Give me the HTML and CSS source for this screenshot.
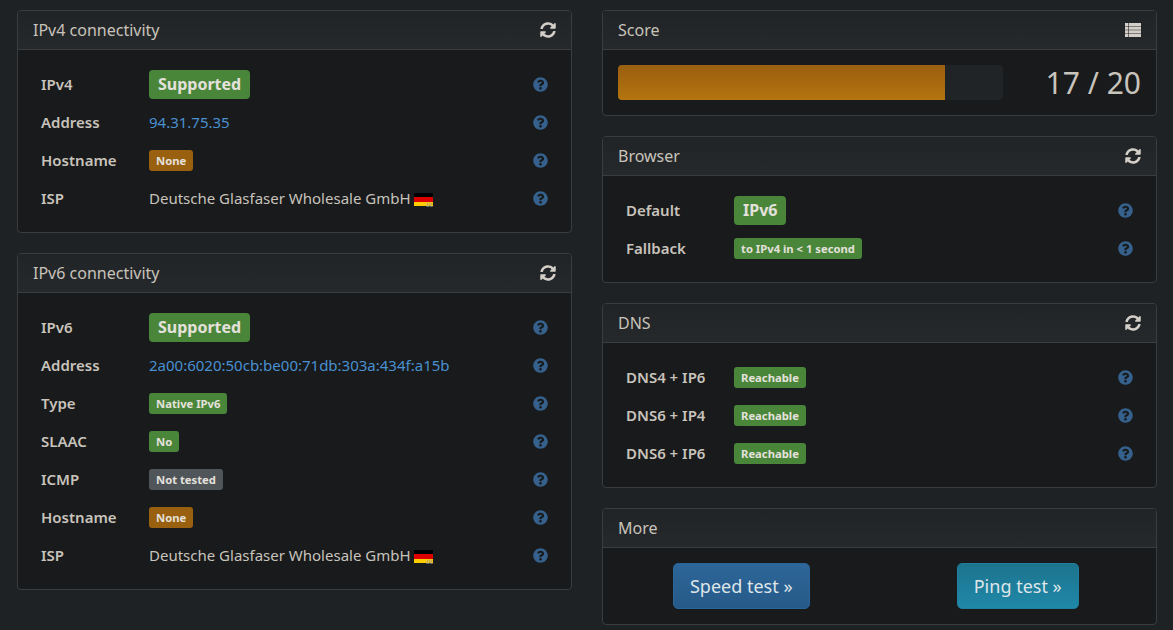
FILE: index.html
```html
<!DOCTYPE html>
<html lang="en">
<head>
    <meta charset="UTF-8">
    <meta name="viewport" content="width=device-width, initial-scale=1.0">
    <title>IPv6 test</title>
    <link rel="stylesheet" href="styles.css">
</head>
<body>
    <svg class="defs" width="0" height="0" aria-hidden="true">
        <symbol id="i-sync" viewBox="0 0 512 512"><path d="M370.72 133.28C339.458 104.008 298.888 87.962 255.848 88c-77.458.068-144.328 53.178-162.791 126.85-1.344 5.363-6.122 9.15-11.651 9.15H24.103c-7.498 0-13.194-6.807-11.807-14.176C33.933 94.924 134.813 8 256 8c66.448 0 126.791 26.136 171.315 68.685L463.03 40.97C478.149 25.851 504 36.559 504 57.941V192c0 13.255-10.745 24-24 24H345.941c-21.382 0-32.09-25.851-16.971-40.971l41.75-41.749zM32 296h134.059c21.382 0 32.09 25.851 16.971 40.971l-41.75 41.75c31.262 29.273 71.835 45.319 114.876 45.28 77.418-.07 144.315-53.144 162.787-126.849 1.344-5.363 6.122-9.15 11.651-9.15h57.304c7.498 0 13.194 6.807 11.807 14.176C478.067 417.076 377.187 504 256 504c-66.448 0-126.791-26.136-171.315-68.685L48.97 471.03C33.851 486.149 8 475.441 8 454.059V320c0-13.255 10.745-24 24-24z"/></symbol>
        <symbol id="i-help" viewBox="0 0 512 512"><path d="M504 256c0 136.997-111.043 248-248 248S8 392.997 8 256C8 119.083 119.043 8 256 8s248 111.083 248 248zM262.655 90c-54.497 0-89.255 22.957-116.549 63.758-3.536 5.286-2.353 12.415 2.715 16.258l34.699 26.31c5.205 3.947 12.621 3.008 16.665-2.122 17.864-22.658 30.113-35.797 57.303-35.797 20.429 0 45.698 13.148 45.698 32.958 0 14.976-12.363 22.667-32.534 33.976C247.128 238.528 216 254.941 216 296v4c0 6.627 5.373 12 12 12h56c6.627 0 12-5.373 12-12v-1.333c0-28.462 83.186-29.647 83.186-106.667 0-58.002-60.165-102-116.531-102zM256 338c-25.365 0-46 20.635-46 46 0 25.364 20.635 46 46 46s46-20.636 46-46c0-25.365-20.635-46-46-46z"/></symbol>
    </svg>

    <div class="columns">
        <div class="column">
            <section class="panel">
                <div class="panel-head">
                    <span>IPv4 connectivity</span>
                    <svg class="head-icon"><use href="#i-sync"/></svg>
                </div>
                <div class="panel-body">
                    <div class="row">
                        <span class="label">IPv4</span>
                        <span class="value"><span class="badge badge-lg green">Supported</span></span>
                        <svg class="help"><use href="#i-help"/></svg>
                    </div>
                    <div class="row">
                        <span class="label">Address</span>
                        <span class="value"><a class="addr" href="#">94.31.75.35</a></span>
                        <svg class="help"><use href="#i-help"/></svg>
                    </div>
                    <div class="row">
                        <span class="label">Hostname</span>
                        <span class="value"><span class="badge orange">None</span></span>
                        <svg class="help"><use href="#i-help"/></svg>
                    </div>
                    <div class="row">
                        <span class="label">ISP</span>
                        <span class="value">Deutsche Glasfaser Wholesale GmbH <span class="flag"><span class="flag-code">DE</span></span></span>
                        <svg class="help"><use href="#i-help"/></svg>
                    </div>
                </div>
            </section>

            <section class="panel">
                <div class="panel-head">
                    <span>IPv6 connectivity</span>
                    <svg class="head-icon"><use href="#i-sync"/></svg>
                </div>
                <div class="panel-body">
                    <div class="row">
                        <span class="label">IPv6</span>
                        <span class="value"><span class="badge badge-lg green">Supported</span></span>
                        <svg class="help"><use href="#i-help"/></svg>
                    </div>
                    <div class="row">
                        <span class="label">Address</span>
                        <span class="value"><a class="addr" href="#">2a00:6020:50cb:be00:71db:303a:434f:a15b</a></span>
                        <svg class="help"><use href="#i-help"/></svg>
                    </div>
                    <div class="row">
                        <span class="label">Type</span>
                        <span class="value"><span class="badge green">Native IPv6</span></span>
                        <svg class="help"><use href="#i-help"/></svg>
                    </div>
                    <div class="row">
                        <span class="label">SLAAC</span>
                        <span class="value"><span class="badge green">No</span></span>
                        <svg class="help"><use href="#i-help"/></svg>
                    </div>
                    <div class="row">
                        <span class="label">ICMP</span>
                        <span class="value"><span class="badge grey">Not tested</span></span>
                        <svg class="help"><use href="#i-help"/></svg>
                    </div>
                    <div class="row">
                        <span class="label">Hostname</span>
                        <span class="value"><span class="badge orange">None</span></span>
                        <svg class="help"><use href="#i-help"/></svg>
                    </div>
                    <div class="row">
                        <span class="label">ISP</span>
                        <span class="value">Deutsche Glasfaser Wholesale GmbH <span class="flag"><span class="flag-code">DE</span></span></span>
                        <svg class="help"><use href="#i-help"/></svg>
                    </div>
                </div>
            </section>
        </div>

        <div class="column">
            <section class="panel">
                <div class="panel-head">
                    <span>Score</span>
                    <svg class="head-icon" viewBox="0 0 16 16">
                        <path d="M0 1h3.4v2.9H0zM4 1h12v2.9H4zM0 4.5h3.4v3.2H0zM4 4.5h12v3.2H4zM0 8.3h3.4v3.2H0zM4 8.3h12v3.2H4zM0 12.1h3.4V15H0zM4 12.1h12V15H4z"/>
                    </svg>
                </div>
                <div class="panel-body score-body">
                    <div class="progress"><div class="progress-bar" style="width: 85%"></div></div>
                    <div class="score">17 / 20</div>
                </div>
            </section>

            <section class="panel">
                <div class="panel-head">
                    <span>Browser</span>
                    <svg class="head-icon"><use href="#i-sync"/></svg>
                </div>
                <div class="panel-body">
                    <div class="row">
                        <span class="label">Default</span>
                        <span class="value"><span class="badge badge-lg green">IPv6</span></span>
                        <svg class="help"><use href="#i-help"/></svg>
                    </div>
                    <div class="row">
                        <span class="label">Fallback</span>
                        <span class="value"><span class="badge green">to IPv4 in &lt; 1 second</span></span>
                        <svg class="help"><use href="#i-help"/></svg>
                    </div>
                </div>
            </section>

            <section class="panel">
                <div class="panel-head">
                    <span>DNS</span>
                    <svg class="head-icon"><use href="#i-sync"/></svg>
                </div>
                <div class="panel-body">
                    <div class="row">
                        <span class="label">DNS4 + IP6</span>
                        <span class="value"><span class="badge green">Reachable</span></span>
                        <svg class="help"><use href="#i-help"/></svg>
                    </div>
                    <div class="row">
                        <span class="label">DNS6 + IP4</span>
                        <span class="value"><span class="badge green">Reachable</span></span>
                        <svg class="help"><use href="#i-help"/></svg>
                    </div>
                    <div class="row">
                        <span class="label">DNS6 + IP6</span>
                        <span class="value"><span class="badge green">Reachable</span></span>
                        <svg class="help"><use href="#i-help"/></svg>
                    </div>
                </div>
            </section>

            <section class="panel">
                <div class="panel-head">
                    <span>More</span>
                </div>
                <div class="panel-body more-body">
                    <a class="btn btn-blue" href="#">Speed test »</a>
                    <a class="btn btn-teal" href="#">Ping test »</a>
                </div>
            </section>
        </div>
    </div>
</body>
</html>
```

FILE: styles.css
```css
body {
    font-family: "Noto Sans", "Open Sans", sans-serif;
    font-size: 15px;
    background-color: #1e2225;
    color: #c8c3bb;
    margin: 0;
    padding: 10px 16px 0 17px;
}
.defs {
    position: absolute;
}
.columns {
    display: grid;
    grid-template-columns: 1fr 1fr;
    gap: 30px;
}
.panel {
    background-color: #181a1c;
    border: 1px solid #3a3d3f;
    border-radius: 4px;
    margin-bottom: 20px;
}
.panel-head {
    height: 39px;
    box-sizing: border-box;
    display: flex;
    align-items: center;
    justify-content: space-between;
    padding: 0 15px;
    font-size: 16px;
    background: linear-gradient(#212426, #26292b);
    border-bottom: 1px solid #3a3d3f;
    border-radius: 3px 3px 0 0;
    height: 39px;
}
.head-icon {
    width: 16px;
    height: 16px;
    fill: #d3cfc8;
}
.panel-body {
    padding: 15px;
}
.row {
    height: 38px;
    display: grid;
    grid-template-columns: 108px 1fr 15px;
    align-items: center;
    padding: 0 8px;
}
.label {
    font-weight: 600;
}
.addr {
    color: #4a90d0;
    text-decoration: none;
}
.badge {
    display: inline-block;
    font-size: 11.25px;
    font-weight: 700;
    line-height: 15px;
    padding: 3px 7px;
    border-radius: 3px;
    color: #e4e1dc;
    vertical-align: middle;
}
.badge-lg {
    font-size: 16px;
    line-height: 21px;
    padding: 4px 9px;
    border-radius: 4px;
}
.green {
    background-color: #4a863a;
}
.orange {
    background-color: #99600f;
}
.grey {
    background-color: #50555a;
}
.help {
    width: 15px;
    height: 15px;
    fill: #35618c;
}
.flag {
    display: inline-block;
    position: relative;
    width: 19px;
    height: 13px;
    vertical-align: -2px;
    background: linear-gradient(#000 33%, #d00 33%, #d00 66%, #fc0 66%);
}
.flag-code {
    position: absolute;
    right: 0;
    bottom: -2px;
    font-family: "DejaVu Sans Mono", monospace;
    font-size: 6px;
    line-height: 7px;
    color: #999;
}
.score-body {
    display: flex;
    align-items: center;
    justify-content: space-between;
}
.progress {
    width: 385px;
    height: 35px;
    background-color: #212426;
    border-radius: 4px;
    overflow: hidden;
}
.progress-bar {
    height: 100%;
    background: linear-gradient(#9a5f10, #b4740f);
}
.score {
    font-size: 30px;
    line-height: 35px;
}
.more-body {
    display: grid;
    grid-template-columns: 1fr 1fr;
    justify-items: center;
    padding: 15px 0;
}
.btn {
    display: block;
    font-size: 18px;
    line-height: 26px;
    padding: 9px 16px;
    border-radius: 5px;
    color: #dfe6ea;
    text-decoration: none;
}
.btn-blue {
    background: linear-gradient(#2d6699, #265a88);
    border: 1px solid #2a6599;
}
.btn-teal {
    background: linear-gradient(#1c748d, #2088a9);
    border: 1px solid #1f7f9c;
}
```
